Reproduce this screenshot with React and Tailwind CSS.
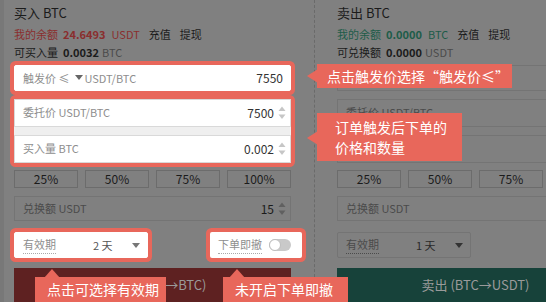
import React from 'react';

const Spinner = ({ color }) => (
    <svg width="8" height="14" viewBox="0 0 8 14" className="shrink-0">
        <path d="M4 0.5 L7.5 5 L0.5 5 Z" fill={color} />
        <path d="M0.5 8.5 L7.5 8.5 L4 13 Z" fill={color} />
    </svg>
);

const Caret = ({ color }) => (
    <svg width="8" height="5" viewBox="0 0 8 5" className="shrink-0">
        <path d="M0 0 L8 0 L4 5 Z" fill={color} />
    </svg>
);

function Field({ label, value, lit }) {
    return (
        <div className={`h-[28px] flex items-center justify-between pl-[8px] pr-[4px] border ${lit ? 'bg-white border-[#d9d9d9]' : 'border-[#747474]'}`}>
            <span className={`text-[11px] ${lit ? 'text-[#8e8e8e]' : 'text-[#4b4b4b]'}`}>{label}</span>
            {value && (
                <span className="flex items-center gap-[4px]">
                    <span className={`text-[12px] ${lit ? 'text-[#333]' : 'text-[#1b1b1b]'}`}>{value}</span>
                    <Spinner color={lit ? '#c6c6c6' : '#606060'} />
                </span>
            )}
        </div>
    );
}

function TradeColumn({ side }) {
    const buy = side === 'buy';
    return (
        <div className="w-[277px] shrink-0 flex flex-col">
            <h3 className="pt-[3px] leading-[20px] text-[13px] text-[#1b1b1b]">{buy ? '买入 BTC' : '卖出 BTC'}</h3>

            {/* Balance */}
            <div className={`mt-[3px] leading-[16px] text-[11px] flex items-center ${buy ? 'text-[#8a2e2e]' : 'text-[#1d5c49]'}`}>
                <span>我的余额</span>
                <span className="ml-[5px] font-bold">{buy ? '24.6493' : '0.0000'}</span>
                <span className="ml-[6px]">{buy ? 'USDT' : 'BTC'}</span>
                <span className="ml-[9px] text-[#1b1b1b]">充值</span>
                <span className="ml-[9px] text-[#1b1b1b]">提现</span>
            </div>
            <div className="mt-[2px] leading-[16px] text-[11px] flex items-center text-[#1b1b1b]">
                <span>{buy ? '可买入量' : '可兑换额'}</span>
                <span className="ml-[5px] font-bold">0.{buy ? '0032' : '0000'}</span>
                <span className="ml-[3px] text-[#4b4b4b]">{buy ? 'BTC' : 'USDT'}</span>
            </div>

            {/* Trigger price */}
            <div className={`mt-[5px] h-[27px] flex items-center justify-between pl-[8px] pr-[7px] border ${buy ? 'bg-white border-white ring-4 ring-[#e8675b] rounded-[2px]' : 'border-[#747474]'}`}>
                <span className={`flex items-center text-[11px] ${buy ? 'text-[#8e8e8e]' : 'text-[#4b4b4b]'}`}>
                    触发价 ≤ <span className="ml-[6px] mr-[1px]"><Caret color={buy ? '#666' : '#333'} /></span>USDT/BTC
                </span>
                {buy && <span className="text-[12px] text-[#333]">7550</span>}
            </div>

            {/* Price + amount */}
            <div className={`mt-[8px] flex flex-col gap-[8px] ${buy ? 'bg-[#efefef] ring-4 ring-[#e8675b] rounded-[2px]' : ''}`}>
                <Field lit={buy} label="委托价 USDT/BTC" value={buy ? '7500' : ''} />
                <Field lit={buy} label={buy ? '买入量 BTC' : '卖出量 BTC'} value={buy ? '0.002' : ''} />
            </div>

            {/* Percent */}
            <div className="mt-[7px] flex gap-[7px]">
                {['25%', '50%', '75%', '100%'].map(p => (
                    <div key={p} className="h-[18px] flex-1 border border-[#6c6c6c] flex items-center justify-center text-[12px] text-[#1b1b1b]">{p}</div>
                ))}
            </div>

            {/* Exchange amount */}
            <div className="mt-[8px] h-[27px] flex items-center justify-between pl-[8px] pr-[4px] border border-[#747474]">
                <span className="text-[11px] text-[#4b4b4b]">兑换额 USDT</span>
                {buy && (
                    <span className="flex items-center gap-[4px]">
                        <span className="text-[12px] text-[#1b1b1b]">15</span>
                        <Spinner color="#606060" />
                    </span>
                )}
            </div>

            {/* Validity + cancel */}
            <div className="mt-[11px] h-[27px] flex items-center justify-between">
                <div className={`w-[134px] h-full flex items-center pl-[8px] pr-[7px] border ${buy ? 'bg-white border-white ring-4 ring-[#e8675b] rounded-[2px]' : 'border-[#747474] rounded-[2px]'}`}>
                    <span className={`text-[11px] border-b border-dotted ${buy ? 'text-[#8e8e8e] border-[#aaa]' : 'text-[#4b4b4b] border-[#4b4b4b]'}`}>有效期</span>
                    <span className={`ml-[37px] text-[11px] ${buy ? 'text-[#555]' : 'text-[#2a2a2a]'}`}>{buy ? '2 天' : '1 天'}</span>
                    <span className="ml-auto"><Caret color={buy ? '#777' : '#333'} /></span>
                </div>
                {buy && (
                    <div className="-mr-[11px] h-full flex items-center gap-[7px] pl-[8px] pr-[11px] bg-white ring-4 ring-[#e8675b] rounded-[2px]">
                        <span className="text-[11px] text-[#8e8e8e] border-b border-dotted border-[#aaa]">下单即撤</span>
                        <span className="relative w-[22px] h-[12px] rounded-full bg-[#c9c9c9]">
                            <span className="absolute left-0 top-0 w-[12px] h-[12px] rounded-full bg-white border border-[#bdbdbd]" />
                        </span>
                    </div>
                )}
            </div>

            {/* Submit */}
            <div className={`mt-[10px] h-[36px] flex items-center justify-center text-[13px] text-[#9a9a9a] ${buy ? 'bg-[#5e2121]' : 'bg-[#17423a]'}`}>
                {buy ? '买入 (USDT→BTC)' : '卖出 (BTC→USDT)'}
            </div>
        </div>
    );
}

const ArrowLeft = ({ className }) => (
    <svg width="11" height="14" viewBox="0 0 11 14" className={className}>
        <path d="M0 7 L11 0 L11 14 Z" fill="#e8675b" />
    </svg>
);

const ArrowUp = ({ className }) => (
    <svg width="16" height="9" viewBox="0 0 16 9" className={className}>
        <path d="M8 0 L16 9 L0 9 Z" fill="#e8675b" />
    </svg>
);

export default function App() {
    return (
        <div className="relative w-[546px] h-[302px] overflow-hidden bg-[#808080] font-['Noto_Sans_CJK_SC',sans-serif]">
            <div className="flex h-full">
                <div className="w-[4px] shrink-0 bg-[#787878]" />
                <div className="w-[10px] shrink-0" />
                <TradeColumn side="buy" />
                <div className="w-[46px] shrink-0 flex justify-center">
                    <div className="h-full border-l border-dashed border-[#6a6a6a]" />
                </div>
                <TradeColumn side="sell" />
            </div>

            {/* Guide callouts */}
            <ArrowLeft className="absolute left-[307px] top-[69px]" />
            <div className="absolute left-[317px] top-[64px] h-[24px] w-[195px] pl-[10px] bg-[#e8675b] text-white text-[14px] leading-[24px] whitespace-nowrap">
                点击触发价选择“触发价≤”
            </div>

            <ArrowLeft className="absolute left-[307px] top-[131px]" />
            <div className="absolute left-[317px] top-[113px] h-[48px] w-[145px] pl-[18px] pt-[4px] bg-[#e8675b] text-white text-[14px] leading-[20px]">
                订单触发后下单的<br />价格和数量
            </div>

            <ArrowUp className="absolute left-[44px] top-[269px]" />
            <div className="absolute left-[35px] top-[277px] h-[25px] w-[131px] pl-[12px] bg-[#e8675b] text-white text-[14px] leading-[25px] whitespace-nowrap">
                点击可选择有效期
            </div>

            <ArrowUp className="absolute left-[229px] top-[269px]" />
            <div className="absolute left-[223px] top-[277px] h-[25px] w-[125px] pl-[12px] bg-[#e8675b] text-white text-[14px] leading-[25px] whitespace-nowrap">
                未开启下单即撤
            </div>
        </div>
    );
}
